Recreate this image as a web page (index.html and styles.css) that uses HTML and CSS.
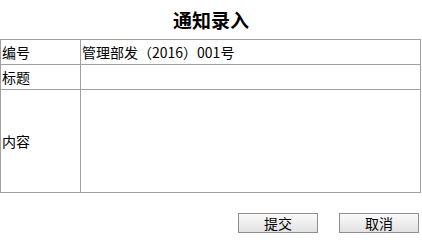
FILE: index.html
```html
<!DOCTYPE html>
<html lang="zh-CN">
<head>
  <meta charset="UTF-8" />
  <title>通知录入</title>
  <link rel="stylesheet" href="styles.css">
</head>
<body>

  <h2 class="title">通知录入</h2>

  <table class="form">
    <tr class="row">
      <td class="label">编号</td>
      <td class="value">管理部发（2016）001号</td>
    </tr>
    <tr class="row">
      <td class="label">标题</td>
      <td class="value"></td>
    </tr>
    <tr class="row big">
      <td class="label">内容</td>
      <td class="value"></td>
    </tr>
  </table>

  <div class="actions">
    <button class="btn">提交</button>
    <button class="btn">取消</button>
  </div>

</body>
</html>
```

FILE: styles.css
```css
body {
  margin: 0;
  font-family: "Noto Sans CJK SC", sans-serif;
  font-size: 14px;
  color: #000;
  background: #fff;
}
.title {
  margin: 0;
  height: 39px;
  line-height: 40px;
  text-align: center;
  font-size: 19px;
  font-weight: bold;
}
.form {
  width: 421px;
  border-collapse: collapse;
}
.form td {
  border: 1px solid #a0a0a0;
  padding: 0 0 0 1px;
  line-height: 18px;
  vertical-align: middle;
}
.row {
  height: 25px;
}
.row.big {
  height: 103px;
}
.label {
  width: 78px;
}
.actions {
  display: flex;
  justify-content: flex-end;
  gap: 21px;
  margin-top: 20px;
  padding-right: 3px;
}
.btn {
  width: 80px;
  height: 20px;
  padding: 0;
  font-family: "Noto Sans CJK SC", sans-serif;
  font-size: 14px;
  line-height: 18px;
  color: #000;
  border: 1px solid #8e8e8e;
  border-radius: 0;
  background: linear-gradient(#fafafa, #e2e2e2);
}
```
